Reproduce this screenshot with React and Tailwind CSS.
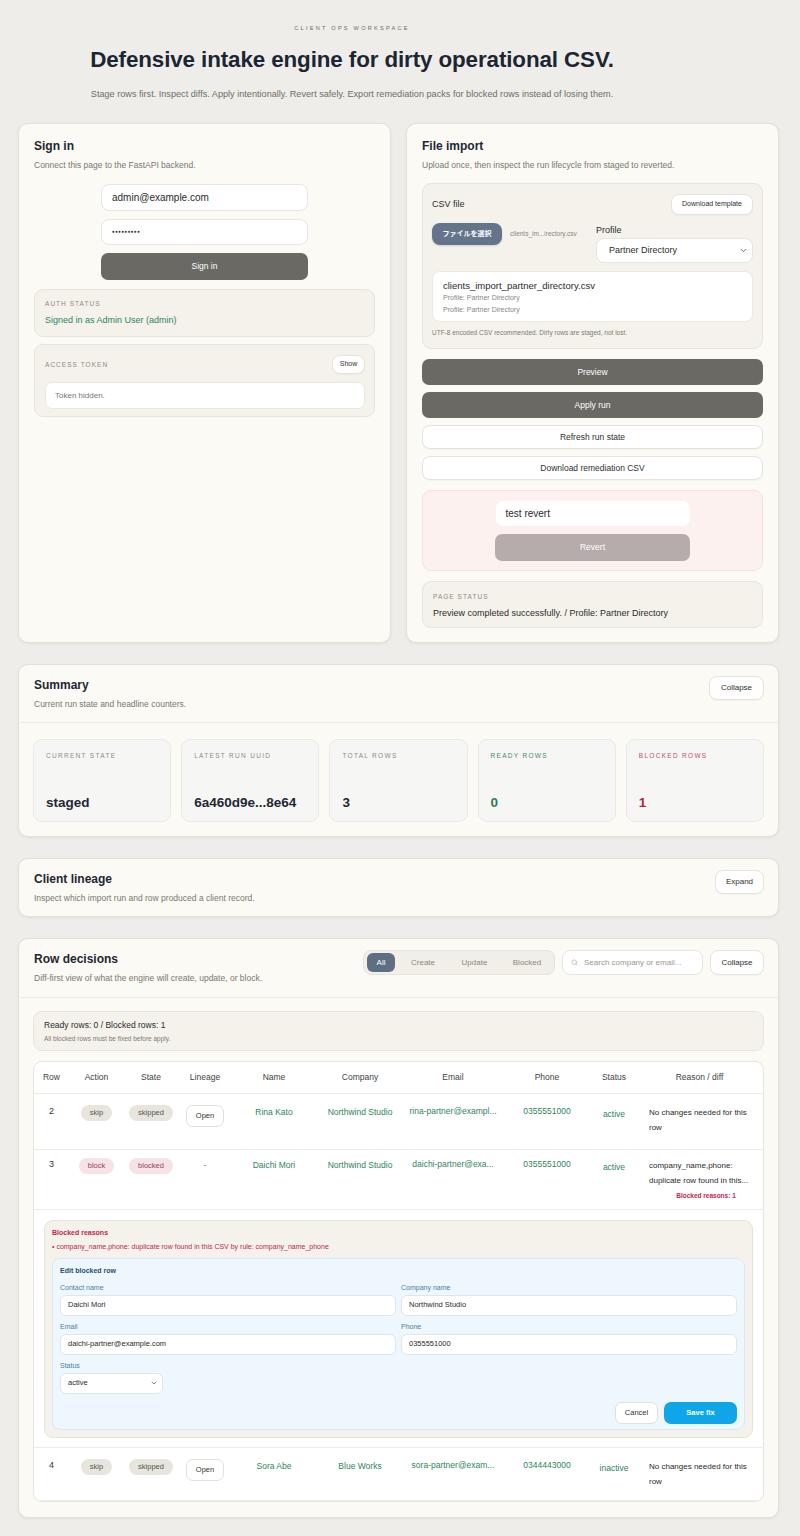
import React from "react";
import { ChevronDown, Search } from "lucide-react";

function Card({ className = "", children }) {
  return (
    <section
      className={`rounded-[10px] border border-[#e4e1d7] bg-[#fbfaf4] shadow-[0_1px_3px_rgba(60,50,30,0.07)] ${className}`}
    >
      {children}
    </section>
  );
}

function Title({ children }) {
  return <h2 className="text-[12px] font-bold leading-[14px] text-[#1e2733]">{children}</h2>;
}

function Sub({ children }) {
  return <p className="mt-[6px] text-[8.5px] leading-[12px] text-[#7a7872]">{children}</p>;
}

function Eyebrow({ className = "text-[#8d8b85]", children }) {
  return (
    <div className={`text-[6.5px] uppercase leading-[10px] tracking-[0.16em] ${className}`}>{children}</div>
  );
}

function LightBtn({ className = "", children }) {
  return (
    <div
      className={`flex items-center justify-center rounded-[8px] border border-[#e6e3dc] bg-white text-[8px] text-[#2f2f2f] shadow-[0_1px_1px_rgba(0,0,0,0.03)] ${className}`}
    >
      {children}
    </div>
  );
}

function DarkBtn({ className = "", children }) {
  return (
    <div
      className={`flex items-center justify-center rounded-[7px] bg-[#6a6964] text-[8.5px] text-white ${className}`}
    >
      {children}
    </div>
  );
}

function Stat({ label, value, tone }) {
  const labelCls =
    tone === "green" ? "text-[#3d8c68]" : tone === "red" ? "text-[#c24a6c]" : "text-[#8d8b85]";
  const valueCls =
    tone === "green" ? "text-[#2a7d59]" : tone === "red" ? "text-[#b8234c]" : "text-[#1e2733]";
  return (
    <div className="flex h-[83px] flex-col justify-between rounded-[9px] border border-[#ebe9e3] bg-[#f6f7f5] pb-[10px] pl-[12px] pt-[11px]">
      <div className={`text-[6.5px] uppercase leading-[10px] tracking-[0.2em] ${labelCls}`}>{label}</div>
      <div className={`text-[13.5px] font-bold leading-[16px] ${valueCls}`}>{value}</div>
    </div>
  );
}

function Pill({ tone, children }) {
  const cls = tone === "red" ? "bg-[#f5e3e5] text-[#9b4456]" : "bg-[#e8e5de] text-[#57554f]";
  return (
    <div className="flex justify-center">
      <span className={`flex h-[16px] items-center rounded-full px-[9px] text-[7.5px] leading-[16px] ${cls}`}>
        {children}
      </span>
    </div>
  );
}

function OpenBtn() {
  return (
    <div className="flex justify-center">
      <span className="flex h-[22px] w-[38px] items-center justify-center rounded-[7px] border border-[#e3e0d9] bg-white text-[7.5px] leading-[10px] text-[#333]">
        Open
      </span>
    </div>
  );
}

const G = "text-[#2f8461]";

function DataRow({ pad, row, action, state, lineage, name, company, email, phone, status, reason, blocked }) {
  const red = action === "block";
  const tdBase = `${pad} align-top text-center leading-[12px]`;
  return (
    <tr className="border-b border-[#eeece6]">
      <td className={tdBase}>
        <div className="text-[9px] leading-[13px] text-[#333]">{row}</div>
      </td>
      <td className={tdBase}>
        <Pill tone={red ? "red" : "gray"}>{action}</Pill>
      </td>
      <td className={tdBase}>
        <Pill tone={red ? "red" : "gray"}>{state}</Pill>
      </td>
      <td className={tdBase}>
        {lineage ? <OpenBtn /> : <div className="text-[8.5px] leading-[15px] text-[#777]">-</div>}
      </td>
      <td className={tdBase}>
        <div className={`text-[8.5px] leading-[14px] ${G}`}>{name}</div>
      </td>
      <td className={tdBase}>
        <div className={`text-[8.5px] leading-[14px] ${G}`}>{company}</div>
      </td>
      <td className={tdBase}>
        <div className={`whitespace-nowrap text-[8.5px] leading-[12px] ${G}`}>{email}</div>
      </td>
      <td className={tdBase}>
        <div className={`text-[8.5px] leading-[12px] ${G}`}>{phone}</div>
      </td>
      <td className={tdBase}>
        <div className={`pt-[2px] text-[8.5px] leading-[14px] ${G}`}>{status}</div>
      </td>
      <td className={`${pad} pl-[13px] pr-[12px] align-top text-left leading-[12px]`}>
        {reason.map((l, i) => (
          <div key={i} className="whitespace-nowrap text-[8px] leading-[15px] text-[#2b2b2b]">
            {l}
          </div>
        ))}
        {blocked ? (
          <div className="mt-[3px] pl-[12px] text-center text-[6.5px] font-bold leading-[10px] text-[#c0264f]">
            Blocked reasons: 1
          </div>
        ) : null}
      </td>
    </tr>
  );
}

function Field({ label, value }) {
  return (
    <div>
      <div className="text-[7px] leading-[9px] text-[#4a7ea3]">{label}</div>
      <div className="mt-[3px] flex h-[21px] items-center rounded-[6px] border border-[#dfe6ea] bg-white px-[7px] text-[7.5px] text-[#2b2b2b]">
        {value}
      </div>
    </div>
  );
}

export default function App() {
  return (
    <div className="min-h-[1536px] bg-[#eeede9] pb-[20px] font-['Liberation_Sans','Noto_Sans_CJK_JP',Arial,sans-serif] text-[#222]">
      <header className="w-[704px] pt-[24px] text-center">
        <div className="text-[5.6px] uppercase leading-[8px] tracking-[0.4em] text-[#6b6b66]">Client ops workspace</div>
        <h1 className="mt-[15px] text-[22.4px] font-bold leading-[26px] tracking-[-0.005em] text-[#1c2633]">
          Defensive intake engine for dirty operational CSV.
        </h1>
        <p className="mt-[15px] text-[9.15px] leading-[12px] text-[#6f6e69]">
          Stage rows first. Inspect diffs. Apply intentionally. Revert safely. Export remediation packs for blocked
          rows instead of losing them.
        </p>
      </header>

      <main className="ml-[18px] w-[761px]">
        <div className="mt-[23px] grid grid-cols-2 gap-[15px]">
          {/* Sign in */}
          <Card className="px-[15px] pt-[15px]">
            <Title>Sign in</Title>
            <Sub>Connect this page to the FastAPI backend.</Sub>
            <div className="mx-auto mt-[13px] flex w-[207px] flex-col">
              <div className="flex h-[27px] items-center rounded-[8px] border border-[#e8e5de] bg-white px-[10px] text-[10px] text-[#2b2b2b]">
                admin@example.com
              </div>
              <div className="mt-[8px] flex h-[26px] items-center rounded-[8px] border border-[#e8e5de] bg-white px-[10px] text-[4.6px] tracking-[0.08em] text-[#2b2b2b]">
                ●●●●●●●●●
              </div>
              <DarkBtn className="mt-[8px] h-[27px]">Sign in</DarkBtn>
            </div>
            <div className="mt-[9px] h-[48px] rounded-[9px] border border-[#e8e5dc] bg-[#f4f2eb] px-[10px] pt-[9px]">
              <Eyebrow>Auth status</Eyebrow>
              <div className="mt-[5px] text-[9px] leading-[12px] text-[#2f8461]">Signed in as Admin User (admin)</div>
            </div>
            <div className="mt-[7px] rounded-[9px] border border-[#e8e5dc] bg-[#f4f2eb] pb-[7px] pl-[10px] pr-[9px] pt-[10px]">
              <div className="flex h-[19px] items-center justify-between">
                <Eyebrow>Access token</Eyebrow>
                <LightBtn className="h-[19px] w-[33px] !text-[7px]">Show</LightBtn>
              </div>
              <div className="mt-[8px] flex h-[27px] items-center rounded-[7px] border border-[#ebe8e1] bg-white px-[9px] text-[8px] text-[#77756f]">
                Token hidden.
              </div>
            </div>
          </Card>

          {/* File import */}
          <Card className="px-[15px] pb-[14px] pt-[15px]">
            <Title>File import</Title>
            <Sub>Upload once, then inspect the run lifecycle from staged to reverted.</Sub>
            <div className="mt-[12px] rounded-[9px] border border-[#e8e5dc] bg-[#f4f2eb] pb-[10px] pl-[9px] pr-[9px] pt-[10px]">
              <div className="flex h-[21px] items-center justify-between">
                <span className="text-[9px] text-[#2b2b2b]">CSV file</span>
                <LightBtn className="h-[21px] w-[82px] !text-[7px]">Download template</LightBtn>
              </div>
              <div className="mt-[8px] flex items-start">
                <div className="flex h-[22px] flex-1 items-center">
                  <span className="flex h-[22px] w-[70px] items-center justify-center rounded-[8px] bg-[#64748b] text-[7px] font-bold text-white shadow-[0_1px_2px_rgba(0,0,0,0.15)]">
                    ファイルを選択
                  </span>
                  <span className="ml-[8px] text-[6.5px] text-[#8a877f]">clients_im...irectory.csv</span>
                </div>
                <div className="w-[157px]">
                  <div className="mt-[1px] text-[9px] leading-[12px] text-[#2b2b2b]">Profile</div>
                  <div className="mt-[2px] flex h-[25px] items-center justify-between rounded-[8px] border border-[#e8e5de] bg-white pl-[12px] pr-[4px] text-[9px] text-[#2b2b2b]">
                    <span>Partner Directory</span>
                    <ChevronDown size={9} strokeWidth={2} className="text-[#444]" />
                  </div>
                </div>
              </div>
              <div className="mt-[8px] h-[51px] rounded-[8px] border border-[#eceae3] bg-white pl-[10px] pt-[7px]">
                <div className="text-[9.5px] leading-[13px] text-[#2b2b2b]">clients_import_partner_directory.csv</div>
                <div className="text-[7px] leading-[12px] text-[#8a877f]">Profile: Partner Directory</div>
                <div className="text-[7px] leading-[12px] text-[#8a877f]">Profile: Partner Directory</div>
              </div>
              <div className="mt-[6px] text-[6.5px] leading-[10px] text-[#7e7b74]">
                UTF-8 encoded CSV recommended. Dirty rows are staged, not lost.
              </div>
            </div>
            <DarkBtn className="mt-[10px] h-[26px]">Preview</DarkBtn>
            <DarkBtn className="mt-[7px] h-[26px]">Apply run</DarkBtn>
            <LightBtn className="mt-[7px] h-[24px] !text-[8.5px]">Refresh run state</LightBtn>
            <LightBtn className="mt-[7px] h-[24px] !text-[8.5px]">Download remediation CSV</LightBtn>
            <div className="mt-[10px] flex h-[81px] flex-col items-center rounded-[9px] border border-[#f6e1df] bg-[#fdf1f0] pt-[10px]">
              <div className="flex h-[25px] w-[194px] items-center rounded-[7px] bg-white px-[10px] text-[10px] text-[#2b2b2b]">
                test revert
              </div>
              <div className="mt-[8px] flex h-[27px] w-[195px] items-center justify-center rounded-[7px] bg-[#b6acab] text-[8.5px] text-white">
                Revert
              </div>
            </div>
            <div className="mt-[10px] h-[47px] rounded-[9px] border border-[#e8e5dc] bg-[#f4f2eb] px-[10px] pt-[10px]">
              <Eyebrow>Page status</Eyebrow>
              <div className="mt-[5px] text-[9px] leading-[12px] text-[#2b2b2b]">
                Preview completed successfully. / Profile: Partner Directory
              </div>
            </div>
          </Card>
        </div>

        {/* Summary */}
        <Card className="mt-[21px]">
          <div className="flex items-start justify-between border-b border-[#eeebe3] pb-[12px] pl-[15px] pr-[14px] pt-[13px]">
            <div>
              <Title>Summary</Title>
              <Sub>Current run state and headline counters.</Sub>
            </div>
            <LightBtn className="-mt-[2px] h-[24px] w-[55px]">Collapse</LightBtn>
          </div>
          <div className="grid grid-cols-5 gap-[10px] px-[14px] pb-[14px] pt-[16px]">
            <Stat label="Current state" value="staged" />
            <Stat label="Latest run uuid" value="6a460d9e...8e64" />
            <Stat label="Total rows" value="3" />
            <Stat label="Ready rows" value="0" tone="green" />
            <Stat label="Blocked rows" value="1" tone="red" />
          </div>
        </Card>

        {/* Client lineage */}
        <Card className="mt-[21px]">
          <div className="flex items-start justify-between pb-[12px] pl-[15px] pr-[14px] pt-[13px]">
            <div>
              <Title>Client lineage</Title>
              <Sub>Inspect which import run and row produced a client record.</Sub>
            </div>
            <LightBtn className="-mt-[2px] h-[24px] w-[49px]">Expand</LightBtn>
          </div>
        </Card>

        {/* Row decisions */}
        <Card className="mt-[21px]">
          <div className="flex items-start justify-between border-b border-[#eeebe3] pb-[13px] pl-[15px] pr-[14px] pt-[13px]">
            <div>
              <Title>Row decisions</Title>
              <Sub>Diff-first view of what the engine will create, update, or block.</Sub>
            </div>
            <div className="-mt-[2px] flex h-[25px] items-center gap-[7px]">
              <div className="flex h-[25px] w-[192px] items-center rounded-[8px] border border-[#e6e3da] bg-[#f1efe8] pl-[3px] text-[8px] text-[#8a877f]">
                <span className="flex h-[19px] w-[28px] items-center justify-center rounded-[6px] bg-[#5f6f83] text-white">
                  All
                </span>
                <span className="ml-[2px] w-[52px] text-center">Create</span>
                <span className="w-[51px] text-center">Update</span>
                <span className="w-[54px] text-center">Blocked</span>
              </div>
              <div className="flex h-[25px] w-[141px] items-center rounded-[8px] border border-[#e8e5de] bg-white pl-[8px] text-[8px] text-[#9a978f]">
                <Search size={7} strokeWidth={2} className="text-[#a8a59d]" />
                <span className="ml-[6px]">Search company or email...</span>
              </div>
              <LightBtn className="h-[25px] w-[54px]">Collapse</LightBtn>
            </div>
          </div>

          <div className="px-[14px] pb-[15px] pt-[13px]">
            <div className="h-[40px] rounded-[9px] border border-[#e8e5dc] bg-[#f4f2eb] pl-[10px] pt-[7px]">
              <div className="text-[8.5px] leading-[12px] text-[#2b2b2b]">Ready rows: 0 / Blocked rows: 1</div>
              <div className="mt-[3px] text-[6.5px] leading-[9px] text-[#7e7b74]">
                All blocked rows must be fixed before apply.
              </div>
            </div>

            <div className="mt-[10px] overflow-hidden rounded-[9px] border border-[#e8e5dd] bg-white">
              <table className="w-full table-fixed border-collapse">
                <colgroup>
                  <col className="w-[35px]" />
                  <col className="w-[55px]" />
                  <col className="w-[54px]" />
                  <col className="w-[54px]" />
                  <col className="w-[84px]" />
                  <col className="w-[88px]" />
                  <col className="w-[98px]" />
                  <col className="w-[90px]" />
                  <col className="w-[44px]" />
                  <col />
                </colgroup>
                <thead>
                  <tr className="h-[31px] border-b border-[#eeece6] text-[8.5px] text-[#3f3f3f]">
                    <th className="text-center font-normal">Row</th>
                    <th className="text-center font-normal">Action</th>
                    <th className="text-center font-normal">State</th>
                    <th className="text-center font-normal">Lineage</th>
                    <th className="text-center font-normal">Name</th>
                    <th className="text-center font-normal">Company</th>
                    <th className="text-center font-normal">Email</th>
                    <th className="text-center font-normal">Phone</th>
                    <th className="text-center font-normal">Status</th>
                    <th className="text-center font-normal">Reason / diff</th>
                  </tr>
                </thead>
                <tbody>
                  <DataRow
                    pad="pt-[11px] pb-[14px]"
                    row="2"
                    action="skip"
                    state="skipped"
                    lineage
                    name="Rina Kato"
                    company="Northwind Studio"
                    email="rina-partner@exampl..."
                    phone="0355551000"
                    status="active"
                    reason={["No changes needed for this", "row"]}
                  />
                  <DataRow
                    pad="pt-[8px] pb-[8px]"
                    row="3"
                    action="block"
                    state="blocked"
                    name="Daichi Mori"
                    company="Northwind Studio"
                    email="daichi-partner@exa..."
                    phone="0355551000"
                    status="active"
                    reason={["company_name,phone:", "duplicate row found in this..."]}
                    blocked
                  />
                  <tr className="border-b border-[#eeece6]">
                    <td colSpan={10} className="px-[10px] pb-[9px] pt-[10px] leading-[12px]">
                      <div className="rounded-[9px] border border-[#e6e2d8] bg-[#f4f2eb] px-[7px] pb-[7px] pt-[7px]">
                        <div className="text-[7px] font-bold leading-[9px] text-[#c0264f]">Blocked reasons</div>
                        <div className="mt-[5px] text-[7px] leading-[10px] text-[#c0264f]">
                          • company_name,phone: duplicate row found in this CSV by rule: company_name_phone
                        </div>
                        <div className="mt-[6px] rounded-[8px] border border-[#d9e9f4] bg-[#eef7fd] px-[7px] pb-[5px] pt-[7px]">
                          <div className="text-[7px] font-bold leading-[9px] text-[#1f4f70]">Edit blocked row</div>
                          <div className="mt-[8px] grid grid-cols-2 gap-x-[5px] gap-y-[6px]">
                            <Field label="Contact name" value="Daichi Mori" />
                            <Field label="Company name" value="Northwind Studio" />
                            <Field label="Email" value="daichi-partner@example.com" />
                            <Field label="Phone" value="0355551000" />
                          </div>
                          <div className="mt-[6px] text-[7px] leading-[9px] text-[#4a7ea3]">Status</div>
                          <div className="mt-[3px] flex h-[21px] w-[103px] items-center justify-between rounded-[6px] border border-[#dfe6ea] bg-white pl-[7px] pr-[4px] text-[7.5px] text-[#2b2b2b]">
                            <span>active</span>
                            <ChevronDown size={8} strokeWidth={2} className="text-[#444]" />
                          </div>
                          <div className="mt-[8px] flex justify-end gap-[6px]">
                            <span className="flex h-[22px] w-[43px] items-center justify-center rounded-[7px] border border-[#e3e0d9] bg-white text-[7.5px] text-[#333]">
                              Cancel
                            </span>
                            <span className="flex h-[22px] w-[73px] items-center justify-center rounded-[7px] bg-[#0ea5e9] text-[7.5px] font-bold text-white">
                              Save fix
                            </span>
                          </div>
                        </div>
                      </div>
                    </td>
                  </tr>
                  <DataRow
                    pad="pt-[11px] pb-[11px]"
                    row="4"
                    action="skip"
                    state="skipped"
                    lineage
                    name="Sora Abe"
                    company="Blue Works"
                    email="sora-partner@exam..."
                    phone="0344443000"
                    status="inactive"
                    reason={["No changes needed for this", "row"]}
                  />
                </tbody>
              </table>
            </div>
          </div>
        </Card>
      </main>
    </div>
  );
}
